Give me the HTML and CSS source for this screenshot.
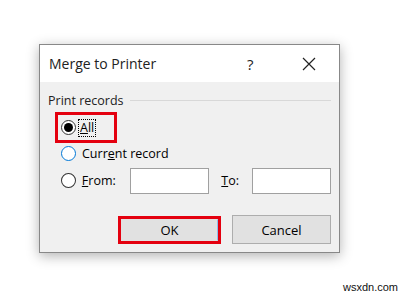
FILE: index.html
```html
<!DOCTYPE html>
<html lang="en">
<head>
  <meta charset="UTF-8">
  <title>Merge to Printer</title>
  <link rel="stylesheet" href="styles.css">
</head>
<body>
  <div class="page">
    <div class="dialog">
      <div class="titlebar">
        <span class="title">Merge to Printer</span>
        <span class="help">?</span>
        <span class="close">
          <svg width="14" height="14" viewBox="0 0 14 14"><path d="M1 1 L13 13 M13 1 L1 13" stroke="#222" stroke-width="1.2" fill="none"/></svg>
        </span>
      </div>
      <div class="content">
        <div class="group-head">
          <span>Print records</span>
          <span class="rule"></span>
        </div>
        <div class="option highlight">
          <span class="radio checked"></span>
          <span class="focus"><u>A</u>ll</span>
        </div>
        <div class="option current">
          <span class="radio hover"></span>
          <span>Curr<u>e</u>nt record</span>
        </div>
        <div class="option range">
          <span class="radio"></span>
          <span class="lbl-from"><u>F</u>rom:</span>
          <span class="field"></span>
          <span class="lbl-to"><u>T</u>o:</span>
          <span class="field"></span>
        </div>
        <div class="buttons">
          <div class="btn-mark"><button type="button" class="btn default">OK</button></div>
          <button type="button" class="btn">Cancel</button>
        </div>
      </div>
    </div>
    <div class="watermark">wsxdn.com</div>
  </div>
</body>
</html>
```

FILE: styles.css
```css
/* base */
* {
  margin: 0;
  padding: 0;
  box-sizing: border-box;
}
body {
  font-family: 'Open Sans', 'Noto Sans', sans-serif;
  background: #fff;
  color: #000;
}
.page {
  width: 410px;
  height: 297px;
  padding: 44px 0 0 39px;
  position: relative;
}
/* dialog */
.dialog {
  width: 301px;
  height: 209px;
  border: 1px solid #888;
  background: #f0f0f0;
  box-shadow: 0 3px 12px rgba(0,0,0,0.3);
}
.titlebar {
  height: 37px;
  background: #fff;
  display: flex;
  align-items: center;
  padding-left: 9px;
  font-size: 14px;
  color: #222;
}
.title {
  flex: 1;
}
.help {
  width: 14px;
  margin-right: 41px;
  font-size: 15px;
}
.close {
  width: 14px;
  margin-right: 23px;
  display: flex;
}
.content {
  padding: 9px 8px 0 8px;
  font-size: 12.5px;
}
.group-head {
  display: flex;
  align-items: center;
  height: 18px;
  color: #222;
}
.group-head .rule {
  flex: 1;
  height: 1px;
  background: #d8d8d8;
  margin-left: 6px;
}
/* radio rows */
.option {
  display: flex;
  align-items: center;
  height: 27px;
  padding-left: 13px;
  gap: 6px;
}
.option.highlight {
  width: 62px;
  height: 31px;
  margin: 3px 0 0 7px;
  border: 3px solid #e4000f;
  padding-left: 3px;
  gap: 3px;
}
.option.current {
  height: 21px;
}
.radio {
  width: 15px;
  height: 15px;
  border: 1px solid #333;
  border-radius: 50%;
  background: #fff;
  display: flex;
  align-items: center;
  justify-content: center;
}
.radio.checked::after {
  content: '';
  width: 9px;
  height: 9px;
  border-radius: 50%;
  background: #000;
}
.radio.hover {
  border-color: #0078d7;
}
.focus {
  outline: 1px dotted #000;
  padding: 0 1px;
  line-height: 16px;
}
.option.range {
  height: 27px;
  margin-top: 3px;
}
.lbl-from {
  width: 43px;
}
.field {
  width: 80px;
  height: 26px;
  border: 1px solid #a0a0a0;
  background: #fff;
}
.lbl-to {
  width: 25px;
  margin-left: 6px;
}
/* buttons */
.buttons {
  display: flex;
  justify-content: flex-end;
  align-items: center;
  gap: 11px;
  margin-top: 21px;
}
.btn-mark {
  border: 3px solid #e4000f;
  width: 103px;
  height: 28px;
}
.btn {
  font-family: inherit;
  font-size: 13px;
  color: #000;
  background: #e1e1e1;
  border: 1px solid #adadad;
  width: 99px;
  height: 29px;
}
.btn.default {
  width: 97px;
  height: 22px;
  border: 1px solid #e1e1e1;
  border-right-color: #8cc0ee;
}
.watermark {
  position: absolute;
  right: 12px;
  bottom: 4px;
  font-family: 'Liberation Sans', sans-serif;
  font-size: 11px;
  color: #111;
}
```
